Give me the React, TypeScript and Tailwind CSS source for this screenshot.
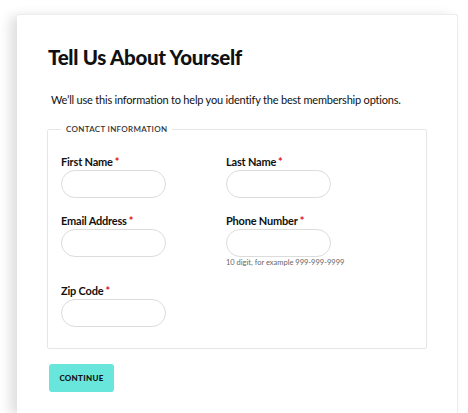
const fieldClass =
    "block h-[28px] w-[105px] rounded-full border border-[#dcdcdc] bg-white px-3 text-[12px] outline-none";

const Field = ({ label, hint }: { label: string; hint?: string }) => (
    <div className="flex flex-col">
        <label className="h-[16px] text-[11px] leading-[16px] font-bold tracking-[-0.2px] text-[#111]">
            {label}
            <span className="ml-[2px] text-[#e0101a]">*</span>
        </label>
        <input className={fieldClass} type="text" />
        {hint && <p className="mt-[1px] text-[7.5px] leading-[10px] text-[#666]">{hint}</p>}
    </div>
);

const App = () => {
    return (
        <div className="min-h-screen bg-white pl-[17px] pt-[14px] pr-[10px] font-['Lato','Open_Sans',sans-serif] text-[#111]">
            <div className="min-h-[399px] w-[441px] rounded-t-[3px] border-r border-t border-[#ececec] bg-white px-[30px] pt-[29px] shadow-[-7px_2px_12px_rgba(0,0,0,0.13)]">
                <h1 className="pl-[1px] text-[20.5px] leading-[26px] font-black tracking-[-0.3px]">Tell Us About Yourself</h1>
                <p className="mt-[22px] pl-[4px] text-[11px] leading-[16px] tracking-[-0.2px] whitespace-nowrap text-[#111]">
                    We’ll use this information to help you identify the best membership options.
                </p>

                <fieldset className="mt-[15px] rounded-[2px] border border-[#e6e6e6] px-[13px] pt-[19px] pb-[21px]">
                    <legend className="px-[5px] text-[8px] leading-[12px] font-semibold tracking-[0.3px] text-[#333] uppercase">
                        Contact Information
                    </legend>
                    <div className="grid grid-cols-[165px_165px] gap-y-[15px]">
                        <Field label="First Name" />
                        <Field label="Last Name" />
                        <Field label="Email Address" />
                        <Field label="Phone Number" hint="10 digit, for example 999-999-9999" />
                        <Field label="Zip Code" />
                    </div>
                </fieldset>

                <button className="mt-[15px] ml-[2px] h-[28px] w-[65px] rounded-[3px] bg-[#68e6dc] text-[8px] font-black tracking-[0.3px] text-[#111]">
                    CONTINUE
                </button>
            </div>
        </div>
    );
};

export default App;
